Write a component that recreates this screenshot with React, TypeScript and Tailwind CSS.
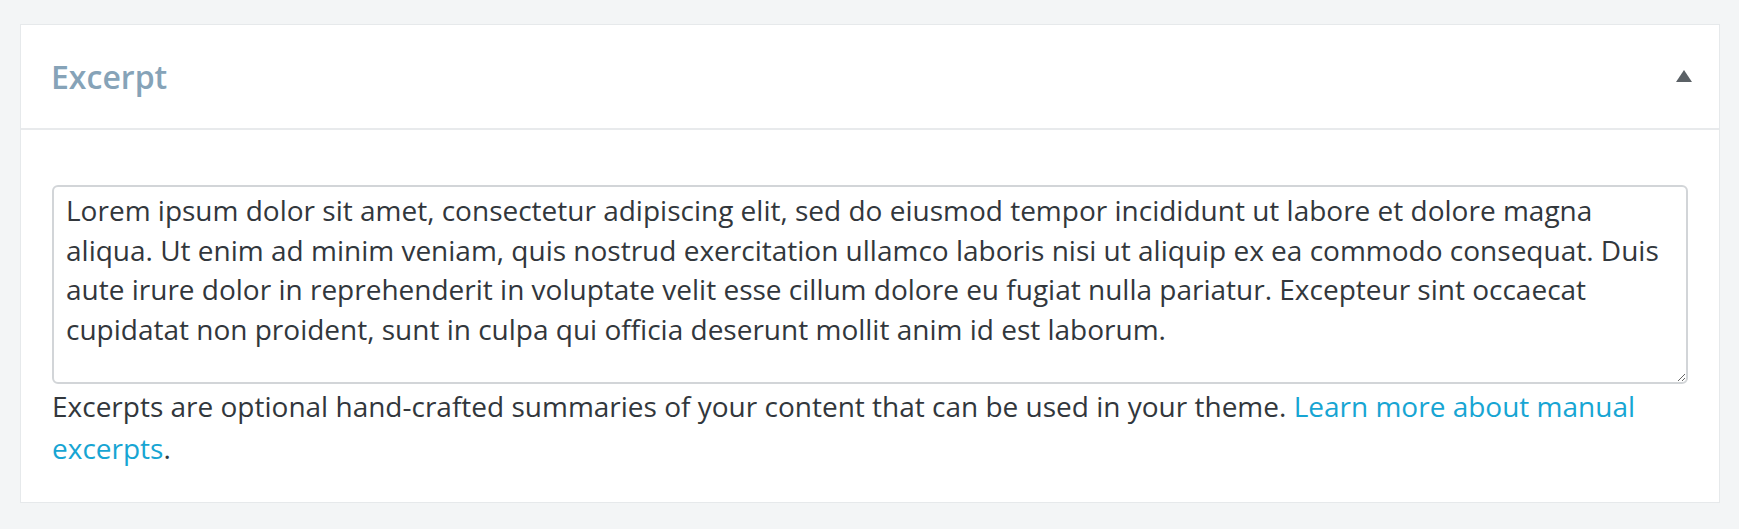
import React from "react";

const text =
  "Lorem ipsum dolor sit amet, consectetur adipiscing elit, sed do eiusmod tempor incididunt ut labore et dolore magna aliqua. Ut enim ad minim veniam, quis nostrud exercitation ullamco laboris nisi ut aliquip ex ea commodo consequat. Duis aute irure dolor in reprehenderit in voluptate velit esse cillum dolore eu fugiat nulla pariatur. Excepteur sint occaecat cupidatat non proident, sunt in culpa qui officia deserunt mollit anim id est laborum.";

export default function App() {
  return (
    <div className="w-full h-[529px] bg-[#f3f5f6] px-[20px] pt-[24px] pr-[19px] font-['Open_Sans',sans-serif]">
      <div className="bg-white border border-[#e6e9eb]">
        <div className="h-[105px] flex items-center justify-between pl-[30px] pr-[27px] border-b-2 border-[#e8eaec]">
          <h2 className="text-[32px] font-semibold text-[#86a3b8] leading-none">Excerpt</h2>
          <svg width="16" height="12" viewBox="0 0 16 12" className="mb-[2px]">
            <polygon points="8,0 16,12 0,12" fill="#5b6166" />
          </svg>
        </div>
        <div className="px-[31px] pt-[55px] pb-[33px]">
          <textarea
            defaultValue={text}
            className="block w-full h-[199px] border-2 border-[#d2d5d8] rounded-[6px] px-[12px] pt-[4px] text-[28px] leading-[39.7px] text-[#32373c] outline-none resize-y font-['Open_Sans',sans-serif]"
          />
          <p className="mt-[1px] text-[28px] leading-[42px] text-[#32373c]">
            Excerpts are optional hand-crafted summaries of your content that can be used in your theme.{" "}
            <a href="#" className="text-[#17a5d3]">Learn more about manual excerpts</a>.
          </p>
        </div>
      </div>
    </div>
  );
}
